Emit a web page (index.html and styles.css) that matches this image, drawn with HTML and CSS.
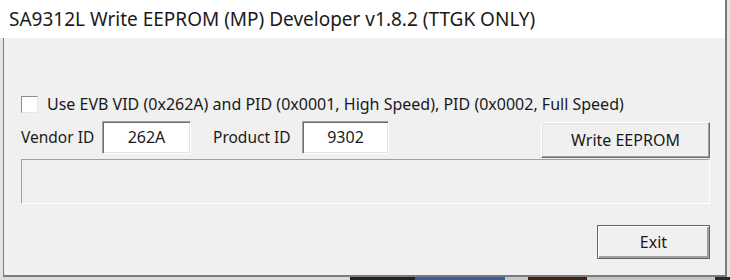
FILE: index.html
```
<!DOCTYPE html>
<html lang="en">
<head>
  <meta charset="UTF-8" />
  <title>SA9312L Write EEPROM (MP) Developer</title>
  <link rel="stylesheet" href="styles.css">
</head>
<body>
  <div class="window">
    <div class="titlebar">SA9312L Write EEPROM (MP) Developer v1.8.2 (TTGK ONLY)</div>
    <div class="client">
      <label class="check-row">
        <span class="checkbox"></span>
        <span>Use EVB VID (0x262A) and PID (0x0001, High Speed), PID (0x0002, Full Speed)</span>
      </label>
      <div class="id-row">
        <span class="field-label">Vendor ID</span>
        <div class="field vendor">262A</div>
        <span class="field-label product-label">Product ID</span>
        <div class="field product">9302</div>
        <button class="btn write-button">Write EEPROM</button>
      </div>
      <div class="status-panel"></div>
      <div class="footer-row">
        <button class="btn exit-button">Exit</button>
      </div>
    </div>
  </div>
  <div class="desktop"></div>
</body>
</html>
```

FILE: styles.css
```
body {
  margin: 0;
  padding: 0;
  background: #e4e4e4;
  font-family: 'Noto Sans', 'Liberation Sans', sans-serif;
  color: #1a1a1a;
  overflow: hidden;
}
.window {
  width: 725px;
  border-right: 2px solid #7c7c7c;
}
.titlebar {
  height: 38px;
  line-height: 38px;
  padding-left: 9px;
  background: #fff;
  font-size: 19px;
  white-space: nowrap;
}
.client {
  box-sizing: border-box;
  margin-left: 3px;
  height: 239px;
  border-left: 1px solid #7c7c7c;
  border-bottom: 2px solid #7c7c7c;
  background: #f0f0f0;
  padding: 56px 15px 0 17px;
  font-size: 16px;
}
.check-row {
  display: flex;
  align-items: center;
  height: 20px;
  gap: 9px;
  white-space: nowrap;
}
.checkbox {
  flex: none;
  width: 15px;
  height: 15px;
  background: #fff;
  border: 1px solid;
  border-color: #8e8e8e #e6e6e6 #e6e6e6 #8e8e8e;
}
.id-row {
  display: flex;
  align-items: flex-start;
  margin-top: 7px;
  height: 37px;
}
.field-label {
  width: 81px;
  line-height: 33px;
  font-size: 15.5px;
}
.product-label {
  margin-left: 22px;
  width: 89px;
}
.field {
  box-sizing: border-box;
  height: 33px;
  line-height: 31px;
  text-align: center;
  background: #fff;
  border: 1px solid;
  border-color: #a0a0a0 #fff #fff #a0a0a0;
  box-shadow: inset 1px 1px #6d6d6d, inset -1px -1px #e3e3e3;
}
.vendor {
  width: 89px;
}
.product {
  width: 87px;
}
.btn {
  box-sizing: border-box;
  font-family: inherit;
  font-size: 16px;
  color: #1a1a1a;
  background: #f0f0f0;
  border: 1px solid;
  border-color: #fff #6d6d6d #6d6d6d #fff;
  box-shadow: inset -1px -1px #a0a0a0, inset 1px 1px #e3e3e3;
  padding: 0;
}
.write-button {
  margin-left: auto;
  margin-top: 1px;
  width: 169px;
  height: 36px;
}
.status-panel {
  height: 45px;
  margin-top: 1px;
  box-sizing: border-box;
  border: 1px solid;
  border-color: #a0a0a0 #fff #fff #a0a0a0;
}
.footer-row {
  display: flex;
  justify-content: flex-end;
  margin-top: 21px;
}
.exit-button {
  width: 113px;
  height: 34px;
  border-color: #646464;
  box-shadow: inset 1px 1px #fff, inset -2px -2px #a0a0a0;
}
.desktop {
  height: 3px;
  background: linear-gradient(to right, #dcdcdc 0, #dcdcdc 350px, #1e2420 350px, #1e2420 415px, #3b5b9c 415px, #3b5b9c 505px, #c8c8c8 505px, #c8c8c8 528px, #3a2418 528px, #3a2418 587px, #c4c4c4 587px, #c4c4c4 715px, #2a2a2a 715px);
}
```
